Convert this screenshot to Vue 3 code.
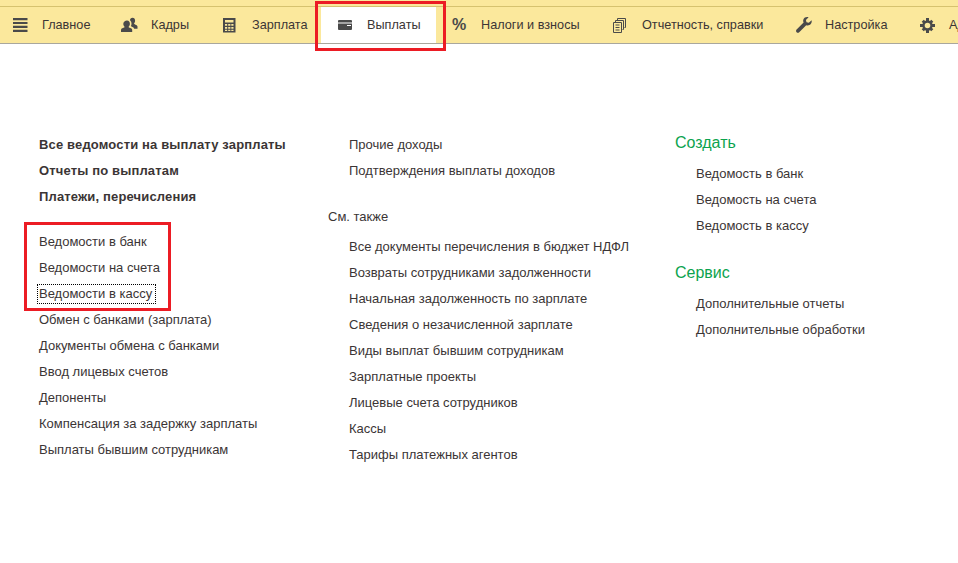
<template>
  <div class="page">
    <div class="top-strip"></div>
    <nav class="nav">
      <div v-for="item in navItems" :key="item.name" class="nav-item" :class="{ active: item.active }">
        <span class="nav-icon">
          <svg v-if="item.icon === 'menu'" width="15" height="14" viewBox="0 0 15 14"><path d="M0 0h14.500v2.200H0zM0 3.900h14.500v2.200H0zM0 7.800h14.500v2.200H0zM0 11.700h14.500v2.200H0z" fill="#4a4a4a"/></svg>
          <svg v-else-if="item.icon === 'people'" width="17" height="16" viewBox="0 0 17 16"><path d="M6 3.500c1.900 0 2.900 1.500 2.900 3.200 0 1.300-.6 2.400-1.300 3 .1.600.5.800 1.300 1.100 1.300.5 2.300 1 2.300 2.200V15H0v-2c0-1.200 1-1.700 2.300-2.200.8-.3 1.200-.5 1.300-1.100-.7-.6-1.300-1.700-1.300-3C2.300 5 4.100 3.500 6 3.500z" fill="#4a4a4a"/><path d="M11.500.8c1.700 0 2.600 1.300 2.600 2.900 0 1.200-.5 2.200-1.100 2.700.1.500.4.700 1.100 1 1.200.5 2.400 1 2.400 2.100v2.200h-3.300c-.3-1.300-1.500-1.800-2.700-2.300-.3-.1-.5-.2-.6-.3.400-.7.600-1.600.6-2.400 0-1.400-.5-2.700-1.500-3.500C9 1.700 10 .8 11.500.8z" fill="#4a4a4a"/></svg>
          <svg v-else-if="item.icon === 'calc'" width="13" height="15" viewBox="0 0 13 15"><path fill-rule="evenodd" d="M0 0h12.500v14.500H0zM2 2v2.500h8.500V2zM2 6v1.800h2.200V6zM5.200 6v1.800h2.200V6zM8.300 6v1.800h2.200V6zM2 8.900v1.800h2.200V8.900zM5.200 8.900v1.800h2.200V8.900zM8.300 8.900v1.800h2.200V8.900zM2 11.700v1.200h2.200v-1.200zM5.200 11.700v1.200h2.200v-1.200zM8.300 11.700v1.200h2.200v-1.200z" fill="#4a4a4a"/></svg>
          <svg v-else-if="item.icon === 'card'" width="14" height="10" viewBox="0 0 14 10"><path d="M1 0h12a1 1 0 0 1 1 1v1.600H0V1a1 1 0 0 1 1-1zM0 3.600h14V9a1 1 0 0 1-1 1H1a1 1 0 0 1-1-1z" fill="#4a4a4a"/><path d="M9 5h4v1H9z" fill="#fff"/></svg>
          <span v-else-if="item.icon === 'percent'" class="percent">%</span>
          <svg v-else-if="item.icon === 'copy'" width="13" height="15" viewBox="0 0 13 15" fill="none" stroke="#4a4a4a"><path d="M4.500 2.500V.5h8v9h-1M2.500 4.500v-2h8v9h-1"/><path d="M.5 4.500h8v10h-8z" fill="#fbe89c"/><path d="M2.500 7h4M2.500 9.500h4M2.500 12h4"/></svg>
          <svg v-else-if="item.icon === 'wrench'" width="16" height="16" viewBox="0 0 16 16"><path d="M15.600 3.200l-2.800 2.600-2.300-.5-.6-2.300L12.600.3C10.500-.4 8.300.4 7.500 2.300c-.5 1.100-.4 2.300.1 3.300L.6 12.600c-.7.700-.7 1.900 0 2.600.7.700 1.900.7 2.600 0l7-7c1 .4 2.200.4 3.200-.1 1.800-.9 2.700-3 2.200-4.900z" fill="#4a4a4a"/></svg>
          <svg v-else-if="item.icon === 'gear'" width="15" height="15" viewBox="0 0 15 15"><circle cx="7.500" cy="7.500" r="4" fill="none" stroke="#4a4a4a" stroke-width="2.400"/><path d="M6 0h3v3H6zM6 12h3v3H6zM0 6h3v3H0zM12 6h3v3h-3z" fill="#4a4a4a"/><path d="M1.700 3.800l2.100-2.100 2 2-2.100 2.100zM9.200 11.300l2.100-2.100 2 2-2.100 2.100zM11.300 1.700l2 2.100-2 2-2.100-2.100zM3.800 9.200l2 2.100-2 2-2.100-2.100z" fill="#4a4a4a"/></svg>
        </span>
        <span class="nav-label">{{ item.name }}</span>
      </div>
    </nav>

    <main class="columns">
      <section class="col col-first">
        <div class="group">
          <a v-for="l in boldLinks" :key="l" class="link bold">{{ l }}</a>
        </div>
        <div class="group">
          <a v-for="l in mainLinks" :key="l" class="link" :class="{ focused: l === 'Ведомости в кассу' }">{{ l }}</a>
        </div>
      </section>

      <section class="col col-second">
        <div class="indent">
          <a v-for="l in otherLinks" :key="l" class="link">{{ l }}</a>
        </div>
        <h4 class="also">См. также</h4>
        <div class="indent">
          <a v-for="l in seeAlso" :key="l" class="link">{{ l }}</a>
        </div>
      </section>

      <section class="col col-third">
        <h3 class="green">Создать</h3>
        <div class="indent">
          <a v-for="l in createLinks" :key="l" class="link">{{ l }}</a>
        </div>
        <h3 class="green service">Сервис</h3>
        <div class="indent">
          <a v-for="l in serviceLinks" :key="l" class="link">{{ l }}</a>
        </div>
      </section>
    </main>

    <!-- красные рамки поверх скриншота -->
    <div class="mark mark-tab"></div>
    <div class="mark mark-list"></div>
  </div>
</template>

<script setup>
const navItems = [
  { name: 'Главное', icon: 'menu' },
  { name: 'Кадры', icon: 'people' },
  { name: 'Зарплата', icon: 'calc' },
  { name: 'Выплаты', icon: 'card', active: true },
  { name: 'Налоги и взносы', icon: 'percent' },
  { name: 'Отчетность, справки', icon: 'copy' },
  { name: 'Настройка', icon: 'wrench' },
  { name: 'Администрирование', icon: 'gear' }
]

const boldLinks = ['Все ведомости на выплату зарплаты', 'Отчеты по выплатам', 'Платежи, перечисления']

const mainLinks = [
  'Ведомости в банк',
  'Ведомости на счета',
  'Ведомости в кассу',
  'Обмен с банками (зарплата)',
  'Документы обмена с банками',
  'Ввод лицевых счетов',
  'Депоненты',
  'Компенсация за задержку зарплаты',
  'Выплаты бывшим сотрудникам'
]

const otherLinks = ['Прочие доходы', 'Подтверждения выплаты доходов']

const seeAlso = [
  'Все документы перечисления в бюджет НДФЛ',
  'Возвраты сотрудниками задолженности',
  'Начальная задолженность по зарплате',
  'Сведения о незачисленной зарплате',
  'Виды выплат бывшим сотрудникам',
  'Зарплатные проекты',
  'Лицевые счета сотрудников',
  'Кассы',
  'Тарифы платежных агентов'
]

const createLinks = ['Ведомость в банк', 'Ведомость на счета', 'Ведомость в кассу']
const serviceLinks = ['Дополнительные отчеты', 'Дополнительные обработки']
</script>

<style scoped>
.page {
  position: relative;
  width: 958px;
  height: 563px;
  overflow: hidden;
  background: #fff;
  font-family: "Liberation Sans", Arial, sans-serif;
  font-size: 13px;
  color: #3b3535;
}

.top-strip {
  height: 6px;
  background: #fbe89c;
  border-bottom: 1px solid #d6c26f;
}

.nav {
  display: flex;
  height: 36px;
  background: #fbe89c;
  border-bottom: 1px solid #a9a79d;
  white-space: nowrap;
  font-size: 12.7px;
}

.nav-item {
  display: flex;
  flex: none;
  box-sizing: border-box;
  align-items: center;
  padding-left: 16px;
}

.nav-item:nth-child(1) { width: 105px; padding-left: 13px; }
.nav-item:nth-child(2) { width: 102px; }
.nav-item:nth-child(3) { width: 114px; }
.nav-item:nth-child(4) { width: 115px; padding-left: 17px; background: #fff; }
.nav-item:nth-child(5) { width: 161px; }
.nav-item:nth-child(6) { width: 183px; }
.nav-item:nth-child(7) { width: 124px; }

.nav-icon {
  display: flex;
  align-items: center;
  width: 29px;
  height: 16px;
}

.nav-item:nth-child(2) .nav-icon {
  width: 30px;
}

.percent {
  font-size: 16px;
  font-weight: 700;
  color: #4a4a4a;
}

.columns {
  display: flex;
  padding-top: 88px;
}

.col-first {
  width: 289px;
  padding-left: 39px;
}

.col-second {
  width: 347px;
}

.link {
  display: block;
  width: fit-content;
  height: 26px;
  line-height: 26px;
}

.bold {
  font-weight: 700;
  letter-spacing: 0.15px;
}

.group + .group {
  margin-top: 19px;
}

.focused {
  box-sizing: border-box;
  height: 20px;
  line-height: 18px;
  margin: 3px 0 3px -2px;
  padding: 0 3px 0 1px;
  border: 1px dotted #000;
}

.indent {
  padding-left: 21px;
}

.also {
  margin: 0;
  height: 30px;
  padding-top: 20px;
  line-height: 26px;
  font-size: 13px;
  font-weight: 400;
}

.green {
  margin: 0 0 5px;
  height: 24px;
  line-height: 22px;
  font-size: 16px;
  font-weight: 400;
  color: #0ca34e;
}

.service {
  margin-top: 23px;
}

.mark {
  position: absolute;
  box-sizing: border-box;
  border: 3px solid #ec1c24;
}

.mark-tab {
  left: 315px;
  top: 1px;
  width: 131px;
  height: 50px;
}

.mark-list {
  left: 24px;
  top: 222px;
  width: 147px;
  height: 89px;
}
</style>

<style>
html, body {
  margin: 0;
  background: #fff;
}
</style>
